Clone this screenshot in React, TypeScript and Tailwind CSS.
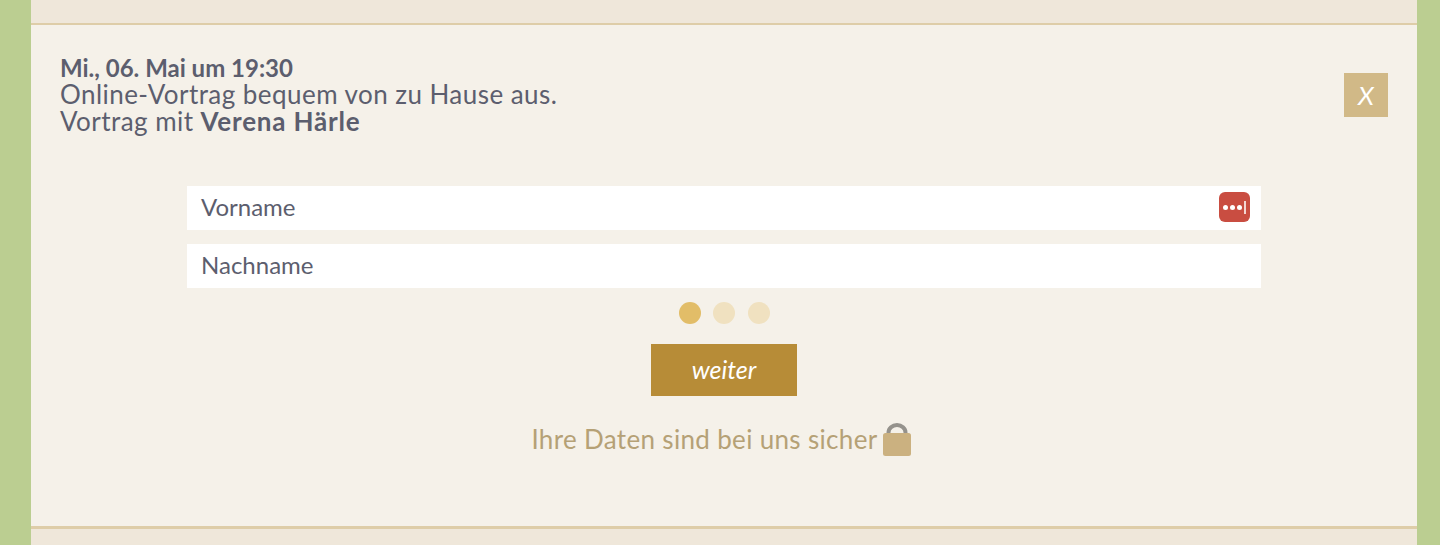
export default function App() {
  return (
    <div className="h-[545px] overflow-hidden bg-[#bbce91] px-[31px] pr-[23px] font-['Lato','Open_Sans',sans-serif]">
      <div className="flex h-full w-[1386px] flex-col bg-[#efe7da]">
        <div className="h-[23px] shrink-0" />
        <div className="flex h-[506px] shrink-0 flex-col border-t-[2px] border-b-[3px] border-[#decda8] bg-[#f5f1e9]">
          {/* Heading */}
          <div className="flex items-start justify-between px-[29px] pt-[29px]">
            <div className="text-[26px] leading-[27px] tracking-[0.45px] text-[#5c5e6e]">
              <div className="text-[24px] font-bold tracking-normal">Mi., 06. Mai um 19:30</div>
              <div>Online-Vortrag bequem von zu Hause aus.</div>
              <div>
                Vortrag mit <span className="font-bold tracking-[0.8px]">Verena Härle</span>
              </div>
            </div>
            <button className="mt-[19px] flex h-[44px] w-[44px] items-center justify-center bg-[#d1b987] text-[26px] italic text-white">
              X
            </button>
          </div>

          {/* Form */}
          <div className="mt-[51px] flex flex-col items-center">
            <div className="flex h-[44px] w-[1074px] items-center justify-between bg-white pb-[2px] pl-[14px] pr-[11px] text-[24px] text-[#5c5e6e]">
              <span>Vorname</span>
              <span className="flex h-[30px] w-[31px] items-center justify-center gap-[2px] rounded-[6px] bg-[#c94d41]">
                <span className="h-[5px] w-[5px] rounded-full bg-white" />
                <span className="h-[5px] w-[5px] rounded-full bg-white" />
                <span className="h-[5px] w-[5px] rounded-full bg-white" />
                <span className="h-[13px] w-[2px] bg-[#f3d6d2]" />
              </span>
            </div>
            <div className="mt-[14px] flex h-[44px] w-[1074px] items-center bg-white pb-[2px] pl-[14px] text-[24px] text-[#5c5e6e]">
              Nachname
            </div>

            <div className="mt-[14px] flex gap-[12.5px]">
              <span className="h-[22px] w-[22px] rounded-full bg-[#e2bd68]" />
              <span className="h-[22px] w-[22px] rounded-full bg-[#f0e1c0]" />
              <span className="h-[22px] w-[22px] rounded-full bg-[#f0e1c0]" />
            </div>

            <button className="mt-[20px] h-[52px] w-[146px] bg-[#b78c37] text-[25px] italic text-white">
              weiter
            </button>

            <div className="mr-[6px] mt-[27px] flex items-center text-[26px] leading-[33px] tracking-[0.33px] text-[#b5a176]">
              <span>Ihre Daten sind bei uns sicher</span>
              <svg className="ml-[5px] h-[33px] w-[28px]" viewBox="0 0 28 33">
                <path d="M5.5 13V9.5a8.5 7.5 0 0 1 17 0V13" fill="none" stroke="#95928c" strokeWidth="4" />
                <rect x="0" y="10" width="28" height="23" rx="2.5" fill="#cbb180" />
              </svg>
            </div>
          </div>
        </div>
      </div>
    </div>
  );
}
